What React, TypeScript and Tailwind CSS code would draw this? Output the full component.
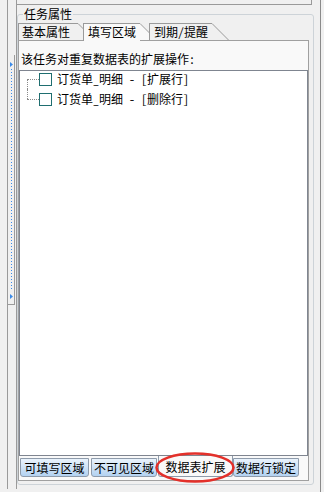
const EDGE = "border-[#9a9a9a]";

function Slant({ fill, h = 17 }: { fill: string; h?: number }) {
  return (
    <svg width="17" height={h} viewBox={`0 0 17 ${h}`} className="block shrink-0">
      <polygon points={`0,0 17,17 17,${h} 0,${h}`} fill={fill} />
      <line x1="0" y1="0.5" x2="16.5" y2="17" stroke="#9a9a9a" strokeWidth="1" />
    </svg>
  );
}

function TopTabs() {
  return (
    <div className="relative z-10 flex h-[17px] items-end">
      <div className="flex h-[17px]">
        <div className={`h-full w-[60px] border-l border-t ${EDGE} bg-[#f0f0f0] pl-[3px] leading-[16px]`}>
          基本属性
        </div>
        <Slant fill="#f0f0f0" />
      </div>
      <div className="-mb-px -ml-[12px] flex h-[18px] items-start">
        <div className={`h-[18px] w-[57px] border-l border-t ${EDGE} bg-[#f9f9f9] pl-[4px] leading-[16px]`}>
          填写区域
        </div>
        <Slant fill="#f9f9f9" />
      </div>
      <div className="-ml-[8px] flex h-[17px]">
        <div className={`h-full w-[63px] border-l border-t ${EDGE} bg-[#f0f0f0] pl-[4px] leading-[16px]`}>
          到期/提醒
        </div>
        <Slant fill="#f0f0f0" />
      </div>
    </div>
  );
}

function TreeRow({ label, first }: { label: string; first?: boolean }) {
  return (
    <div className="flex h-[20px] items-center">
      <div className="ml-[7px] flex h-full w-[12px] flex-col">
        <div className={`h-[10px] ${first ? "" : "border-l border-dotted border-[#8a8a8a]"}`} />
        <div className={`h-[10px] border-t border-dotted border-[#8a8a8a] ${first ? "border-l" : ""}`} />
      </div>
      <div className="h-[13px] w-[13px] border border-[#1f6e70] bg-white" />
      <span className="ml-[5px] whitespace-pre leading-[14px]">{label}</span>
    </div>
  );
}

function BottomTab({ label, w, selected, extra = "" }: { label: string; w: string; selected?: boolean; extra?: string }) {
  if (selected) {
    return (
      <div className={`${w} ${extra} -mt-[2px] h-[21px] rounded-b-[3px] border-x border-b border-[#8e9bab] bg-[#f9f9f9] pt-[3px] text-center leading-[15px]`}>
        {label}
      </div>
    );
  }
  return (
    <div className={`${w} ${extra} h-[19px] rounded-b-[3px] border border-[#8e9bab] bg-linear-to-b from-[#eaf3fc] to-[#b3d2f1] text-center leading-[17px]`}>
      {label}
    </div>
  );
}

function Splitter() {
  return (
    <div className={`ml-[7px] h-[489px] w-[10px] shrink-0 border-x ${EDGE}`}>
      <div className={`mt-[55px] h-[250px] w-[7px] border-b border-r ${EDGE}`}>
        <svg width="6" height="249" viewBox="0 0 6 249" className="block">
          <polygon points="2,7 5,9.5 2,12" fill="#3a8ae8" />
          <line x1="3.5" y1="14" x2="3.5" y2="236" stroke="#3a8ae8" strokeWidth="1" strokeDasharray="1 2" />
          <polygon points="2,239 5,241.5 2,244" fill="#3a8ae8" />
        </svg>
      </div>
    </div>
  );
}

export default function App() {
  return (
    <div className="relative flex h-[492px] w-[324px] overflow-hidden bg-[#f0f0f0] font-['Noto_Sans_Mono_CJK_SC','Noto_Sans_CJK_SC',sans-serif] text-[12px] text-black">
      <Splitter />

      <div className="h-full w-[304px] shrink-0 border-r border-[#8a8a8a]">
        <div className={`h-[5px] w-[295px] border-b border-r ${EDGE}`} />

        <fieldset className="mt-[2px] w-[297px] rounded-[3px] border border-[#cdd3d8] pb-[3px] pr-[4px] pt-[2px]">
          <legend className="ml-[5px] px-[1px] leading-[14px]">任务属性</legend>

          <TopTabs />

          <div className="h-[441px] w-[291px] border border-[#a0a0a0] bg-[#f9f9f9]">
            <div className="h-[29px] pl-[2px] pt-[11px] leading-[14px]">该任务对重复数据表的扩展操作:</div>

            <div className="h-[386px] border border-[#7f8590] bg-white">
              <div className="-mt-[2px]">
                <TreeRow first label="订货单_明细 - [扩展行]" />
                <TreeRow label="订货单_明细 - [删除行]" />
              </div>
            </div>

            <div className="mt-[2px] flex h-[19px] items-start">
              <BottomTab label="可填写区域" w="w-[69px]" extra="ml-[1px]" />
              <BottomTab label="不可见区域" w="w-[66px]" extra="ml-[2px]" />
              <BottomTab label="数据表扩展" w="w-[75px]" extra="ml-[1px]" selected />
              <BottomTab label="数据行锁定" w="w-[66px]" />
            </div>
          </div>
        </fieldset>
      </div>

      <svg width="80" height="32" viewBox="0 0 80 32" className="absolute left-[155px] top-[452px]">
        <ellipse cx="40" cy="15.5" rx="38.5" ry="14" fill="none" stroke="#e3302a" strokeWidth="2.6" />
      </svg>
    </div>
  );
}
